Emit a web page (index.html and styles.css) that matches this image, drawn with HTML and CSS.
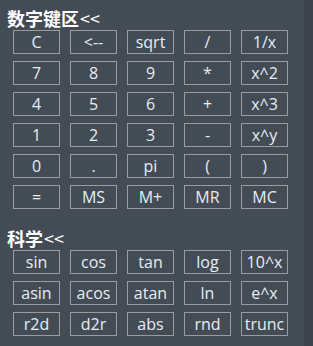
FILE: index.html
```html
<!DOCTYPE html>
<html lang="zh">

<head>
    <meta charset="UTF-8">
    <title>计算器</title>
    <link rel="stylesheet" href="styles.css">
</head>

<body>
    <div class="page">
        <div class="panel">
            <h2 class="section-title">数字键区<span class="fold">&lt;&lt;</span></h2>
            <div class="keys">
                <button>C</button>
                <button>&lt;--</button>
                <button>sqrt</button>
                <button>/</button>
                <button>1/x</button>
                <button>7</button>
                <button>8</button>
                <button>9</button>
                <button>*</button>
                <button>x^2</button>
                <button>4</button>
                <button>5</button>
                <button>6</button>
                <button>+</button>
                <button>x^3</button>
                <button>1</button>
                <button>2</button>
                <button>3</button>
                <button>-</button>
                <button>x^y</button>
                <button>0</button>
                <button>.</button>
                <button>pi</button>
                <button>(</button>
                <button>)</button>
                <button>=</button>
                <button>MS</button>
                <button>M+</button>
                <button>MR</button>
                <button>MC</button>
            </div>

            <h2 class="section-title second">科学<span class="fold">&lt;&lt;</span></h2>
            <div class="keys">
                <button>sin</button>
                <button>cos</button>
                <button>tan</button>
                <button>log</button>
                <button>10^x</button>
                <button>asin</button>
                <button>acos</button>
                <button>atan</button>
                <button>ln</button>
                <button>e^x</button>
                <button>r2d</button>
                <button>d2r</button>
                <button>abs</button>
                <button>rnd</button>
                <button>trunc</button>
            </div>
        </div>
        <div class="side"></div>
    </div>
</body>

</html>
```

FILE: styles.css
```css
body {
    margin: 0;
    background-color: #434b55;
    font-family: "Open Sans", "Noto Sans CJK SC", sans-serif;
}

.page {
    display: flex;
    height: 346px;
}

.panel {
    width: 304px;
    padding-top: 6px;
}

.side {
    flex: 1;
    background-color: #3c434b;
}

.section-title {
    margin: 0;
    padding-left: 7px;
    height: 24px;
    line-height: 24px;
    font-family: "Noto Sans CJK SC", sans-serif;
    font-size: 18px;
    font-weight: 700;
    color: #ffffff;
}

/* the << toggle is drawn lighter than the title */
.fold {
    font-weight: 400;
    margin-left: 1px;
}

.section-title.second {
    margin-top: 17px;
}

.keys {
    display: grid;
    grid-template-columns: repeat(5, 47px);
    grid-auto-rows: 24px;
    column-gap: 10px;
    row-gap: 7px;
    padding-left: 13px;
}

button {
    box-sizing: border-box;
    margin: 0;
    padding: 0;
    background: transparent;
    border: 1px solid #9c9c9c;
    border-radius: 0;
    color: #e6eef5;
    font-family: "Open Sans", sans-serif;
    font-size: 16px;
    line-height: 20px;
}
```
